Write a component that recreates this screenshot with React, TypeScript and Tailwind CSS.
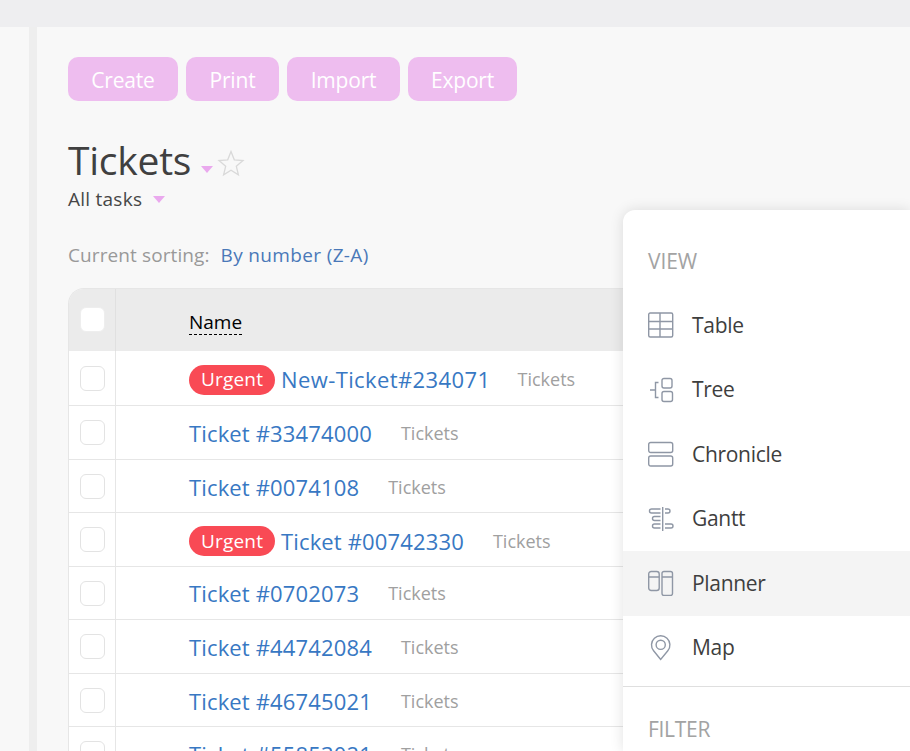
const font = "font-['Open_Sans','Noto_Sans',sans-serif]";

const tickets = [
  { name: "New-Ticket#234071", urgent: true, h: "h-[55px]", shift: true, wide: true },
  { name: "Ticket #33474000", h: "h-[54px]" },
  { name: "Ticket #0074108", h: "h-[53px]" },
  { name: "Ticket #00742330", urgent: true, h: "h-[54px]", shift: true },
  { name: "Ticket #0702073", h: "h-[53px]", shift: true },
  { name: "Ticket #44742084", h: "h-[54px]" },
  { name: "Ticket #46745021", h: "h-[53px]" },
  { name: "Ticket #55853021", h: "h-[54px]" },
];

function Check({ head }: { head?: boolean }) {
  return (
    <span className={`block h-[25px] w-[25px] rounded-[6px] border bg-white ${head ? "border-[#eeeeee]" : "border-[#e3e3e3]"}`} />
  );
}

function Caret({ className }: { className?: string }) {
  return <span className={`inline-block h-0 w-0 border-x-[6px] border-t-[7px] border-x-transparent border-t-[#eaa9ee] ${className ?? ""}`} />;
}

function Icon({ children }: { children: React.ReactNode }) {
  return (
    <svg width="27" height="26" viewBox="0 0 27 26" fill="none" stroke="#8f97a5" strokeWidth="1.4" className="shrink-0">
      {children}
    </svg>
  );
}

const icons: Record<string, React.ReactNode> = {
  Table: (
    <>
      <rect x="1.7" y="1" width="24" height="24" rx="1.5" />
      <path d="M13 1v24M1.7 9.5h24M1.7 17h24" />
    </>
  ),
  Tree: (
    <>
      <rect x="15" y="1.5" width="10" height="9.5" rx="2" />
      <rect x="15" y="14.5" width="10.5" height="10" rx="2" />
      <path d="M11.5 5.5H8.5v15h3M3 13h5.5" />
    </>
  ),
  Chronicle: (
    <>
      <rect x="1.7" y="1.5" width="24" height="10" rx="2" />
      <rect x="1.7" y="15" width="24" height="10" rx="2" />
    </>
  ),
  Gantt: (
    <>
      <path d="M15.7 1v24" />
      <path d="M13.5 3H4.5a1.8 1.8 0 0 0 0 4h9M18 3h3a1.8 1.8 0 0 1 0 4h-3M13.5 10.5H7.5a1.8 1.8 0 0 0 0 4h6M13.5 18H7.5a1.8 1.8 0 0 0 0 4h6M18 18h6a1.8 1.8 0 0 1 0 4h-6" />
    </>
  ),
  Planner: (
    <>
      <rect x="1.7" y="1.5" width="10.5" height="19" rx="2.5" />
      <rect x="15" y="1.5" width="10.5" height="24" rx="2" />
      <path d="M1.7 7h10.5M15 7h10.5" />
    </>
  ),
  Map: (
    <>
      <path d="M13.7 24.5 6.6 15.8a9.2 9.2 0 1 1 14.2 0z" />
      <circle cx="13.7" cy="9.8" r="4.6" />
    </>
  ),
};

function Row({ name, urgent, h, shift, wide }: { name: string; urgent?: boolean; h: string; shift?: boolean; wide?: boolean }) {
  return (
    <div className={`flex ${h} bg-white`}>
      <div className="flex w-[47px] shrink-0 items-center justify-center border-r border-b border-[#e6e6e6]">
        <Check />
      </div>
      <div className="w-[48px] shrink-0 border-b border-[#e6e6e6]" />
      <div className={`flex flex-1 items-center border-b border-[#e6e6e6] pl-[25px] ${shift ? "-mt-px" : ""} ${urgent ? "pt-[4px]" : "pt-[2px]"}`}>
        {urgent && (
          <span className="mr-[6px] flex h-[30px] w-[86px] items-center justify-center rounded-full bg-[#f94a55] text-[19px] font-medium tracking-[0.2px] text-white">
            Urgent
          </span>
        )}
        <a className={`text-[22px] whitespace-nowrap text-[#3878c3] ${wide ? "tracking-[0.4px]" : "tracking-[0.15px]"}`}>{name}</a>
        <span className={`text-[18px] text-[#a0a0a0] ${wide ? "ml-[27px]" : "ml-[29px]"}`}>Tickets</span>
      </div>
    </div>
  );
}

function MenuItem({ label, active }: { label: string; active?: boolean }) {
  return (
    <div className={`flex h-[64.5px] items-center gap-[18px] pl-[24px] ${active ? "bg-[#f4f4f4]" : ""}`}>
      <Icon>{icons[label]}</Icon>
      <span className="text-[21px] tracking-[-0.3px] text-[#3e3e3e]">{label}</span>
    </div>
  );
}

export default function App() {
  return (
    <div className={`relative h-[751px] w-[910px] overflow-hidden bg-[#f8f8f8] ${font}`}>
      <div className="h-[27px] bg-[#eeeef0]" />
      <div className="flex h-[724px]">
        <div className="w-[29px] shrink-0" />
        <div className="w-[8px] shrink-0 bg-[#eeeeee]" />
        <main className="flex-1 pt-[30px] pl-[31px]">
          <div className="flex gap-[8px]">
            {["Create", "Print", "Import", "Export"].map((b, i) => (
              <button
                key={b}
                className={`flex h-[44px] items-center justify-center rounded-[10px] bg-[#eebdef] pt-[4px] text-[21px] tracking-[-0.2px] text-white ${
                  ["w-[110px]", "w-[93px]", "w-[113px]", "w-[109px]"][i]
                }`}
              >
                {b}
              </button>
            ))}
          </div>
          <div className="mt-[34px] flex items-end">
            <h1 className="text-[39px] leading-[50px] tracking-[-0.25px] text-[#404040]">Tickets</h1>
            <Caret className="mb-[12px] ml-[10px]" />
            <svg width="28" height="28" viewBox="0 0 28 28" className="mb-[8px] ml-[4px]" fill="none" stroke="#d9d9d9" strokeWidth="1.3">
              <path d="M14 2.5 17.3 10.8 26 11.5 19.3 17.2 21.4 25.8 14 21.2 6.6 25.8 8.7 17.2 2 11.5 10.7 10.8z" />
            </svg>
          </div>
          <div className="mt-[2px] flex h-[25px] items-center text-[19px] tracking-[0.25px] text-[#464646]">
            All tasks
            <Caret className="ml-[11px]" />
          </div>
          <div className="mt-[31px] flex h-[25px] items-center text-[19px] tracking-[0.1px]">
            <span className="text-[#999999]">Current sorting:</span>
            <a className="ml-[11px] tracking-[0.35px] text-[#4a78b8]">By number (Z-A)</a>
          </div>
          <div className="mt-[20px] overflow-hidden rounded-tl-[16px] border-t border-l border-[#e6e6e6]">
            <div className="flex h-[62px] bg-[#ebebeb]">
              <div className="flex w-[47px] shrink-0 items-center justify-center border-r border-[#e0e0e0] pb-[2px]">
                <Check head />
              </div>
              <div className="flex items-center pt-[6px] pl-[73px]">
                <span className="border-b border-dashed border-black text-[19px] leading-[23px] text-black">Name</span>
              </div>
            </div>
            {tickets.map((t) => (
              <Row key={t.name} {...t} />
            ))}
          </div>
        </main>
      </div>
      <div className="absolute top-[210px] left-[623px] h-[541px] w-[287px] rounded-tl-[12px] bg-white shadow-[0_0_14px_rgba(0,0,0,0.12)]">
        <div className="flex h-[83px] items-center pt-[21px] pl-[25px] text-[21px] tracking-[-0.1px] text-[#a3a3a3]">VIEW</div>
        {["Table", "Tree", "Chronicle", "Gantt", "Planner", "Map"].map((l) => (
          <MenuItem key={l} label={l} active={l === "Planner"} />
        ))}
        <div className="mt-[6px] border-t border-[#dfdfdf]" />
        <div className="pt-[27px] pl-[25px] text-[21px] tracking-[-0.3px] text-[#a3a3a3]">FILTER</div>
      </div>
    </div>
  );
}
